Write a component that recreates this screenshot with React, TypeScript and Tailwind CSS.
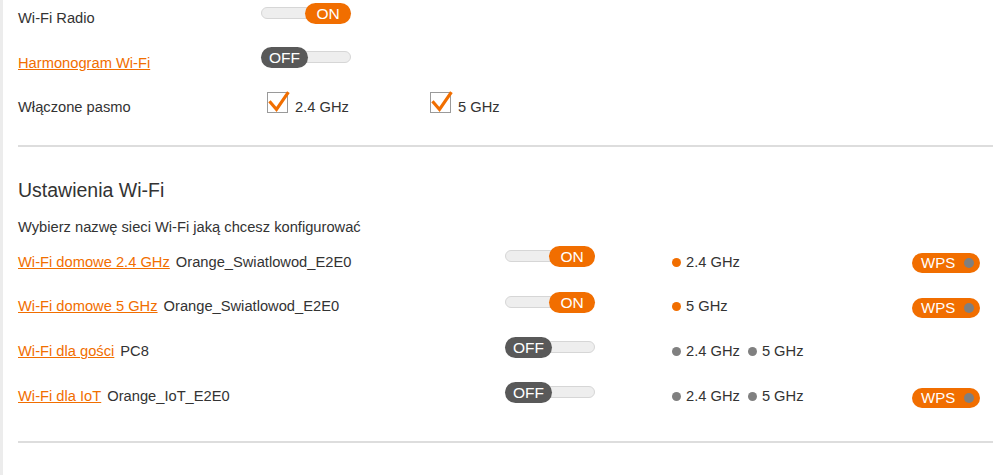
const ORANGE = 'bg-[#f16e00]';

function Toggle({ on }: { on: boolean }) {
  return (
    <div className="relative w-[90px] h-[21px] shrink-0">
      <div className="absolute left-0 right-0 top-[4px] h-[12px] rounded-full bg-[#eeeeee] border border-[#d6d6d6]" />
      {on ? (
        <div className={`absolute right-0 top-0 h-[21px] w-[46px] rounded-full ${ORANGE} text-white text-[15.5px] leading-[21px] text-center`}>
          ON
        </div>
      ) : (
        <div className="absolute left-0 top-0 h-[21px] w-[47px] rounded-full bg-[#595959] text-white text-[15.5px] leading-[21px] text-center">
          OFF
        </div>
      )}
    </div>
  );
}

function Checkbox({ label }: { label: string }) {
  return (
    <div className="flex items-start">
      <div className="relative w-[21px] h-[21px] border border-[#9a9a9a] bg-white shrink-0">
        <svg className="absolute -left-[1px] -top-[3px]" width="24" height="24" viewBox="0 0 24 24">
          <path d="M3.5 12.5 L9.5 19.5 L20.5 3.5" fill="none" stroke="#f16e00" strokeWidth="3.2" strokeLinecap="square" />
        </svg>
      </div>
      <span className="ml-[7px] mt-[5px] leading-[20px]">{label}</span>
    </div>
  );
}

function Dot({ on }: { on: boolean }) {
  return <span className={`inline-block w-[9px] h-[9px] rounded-full ${on ? 'bg-[#f16e00]' : 'bg-[#808080]'}`} />;
}

function Wps() {
  return (
    <div className={`flex items-center justify-between w-[68px] h-[20px] rounded-full ${ORANGE} pl-[9px] pr-[6px] text-white text-[15px] leading-[20px]`}>
      <span>WPS</span>
      <span className="w-[10px] h-[10px] rounded-full bg-[#7f7f7f]" />
    </div>
  );
}

const networks = [
  { name: 'Wi-Fi domowe 2.4 GHz', ssid: 'Orange_Swiatlowod_E2E0', on: true, bands: [['2.4 GHz', true]], wps: true },
  { name: 'Wi-Fi domowe 5 GHz', ssid: 'Orange_Swiatlowod_E2E0', on: true, bands: [['5 GHz', true]], wps: true },
  { name: 'Wi-Fi dla gości', ssid: 'PC8', on: false, bands: [['2.4 GHz', false], ['5 GHz', false]], wps: false },
  { name: 'Wi-Fi dla IoT', ssid: 'Orange_IoT_E2E0', on: false, bands: [['2.4 GHz', false], ['5 GHz', false]], wps: true },
] as const;

export default function App() {
  return (
    <div className="w-[998px] h-[475px] bg-white border-l-[3px] border-[#ececec] pl-[15px] pr-[5px] text-[14.7px] text-[#333333] font-['Liberation_Sans',Arial,sans-serif]">
      {/* radio settings */}
      <div className="flex items-start h-[45px]">
        <div className="w-[243px] mt-[8px] leading-[20px]">Wi-Fi Radio</div>
        <div className="mt-[3px]">
          <Toggle on />
        </div>
      </div>
      <div className="flex items-start h-[45px]">
        <div className="w-[243px] mt-[8px] leading-[20px]">
          <a className="text-[#f16e00] underline">Harmonogram Wi-Fi</a>
        </div>
        <div className="mt-[2px]">
          <Toggle on={false} />
        </div>
      </div>
      <div className="flex items-start h-[30px]">
        <div className="w-[249px] mt-[7px] leading-[20px]">Włączone pasmo</div>
        <div className="mt-[2px] w-[163px]">
          <Checkbox label="2.4 GHz" />
        </div>
        <div className="mt-[2px]">
          <Checkbox label="5 GHz" />
        </div>
      </div>

      <div className="mt-[25px] h-[2px] bg-[#dddddd]" />

      {/* wifi networks */}
      <h2 className="mt-[31px] text-[19.5px] leading-[24px]">Ustawienia Wi-Fi</h2>
      <p className="mt-[15px] leading-[20px]">Wybierz nazwę sieci Wi-Fi jaką chcesz konfigurować</p>

      <div className="mt-[8px]">
        {networks.map((n, i) => (
          <div key={n.name} className="flex items-start h-[45px]">
            <div className={`w-[487px] leading-[20px] ${i === 0 ? 'mt-[7px]' : 'mt-[6px]'}`}>
              <a className="text-[#f16e00] underline">{n.name}</a>
              <span className="ml-[6px]">{n.ssid}</span>
            </div>
            <div className={`w-[167px] ${i === 0 ? 'mt-[1px]' : 'mt-[2px]'}`}>
              <Toggle on={n.on} />
            </div>
            <div className={`w-[240px] flex items-center gap-[8px] leading-[20px] ${i === 0 ? 'mt-[7px]' : 'mt-[6px]'}`}>
              {n.bands.map(([b, on]) => (
                <span key={b} className="flex items-center gap-[5px]">
                  <Dot on={on} />
                  {b}
                </span>
              ))}
            </div>
            {n.wps && (
              <div className="mt-[8px]">
                <Wps />
              </div>
            )}
          </div>
        ))}
      </div>

      <div className="mt-[16px] h-[2px] bg-[#dddddd]" />
    </div>
  );
}
